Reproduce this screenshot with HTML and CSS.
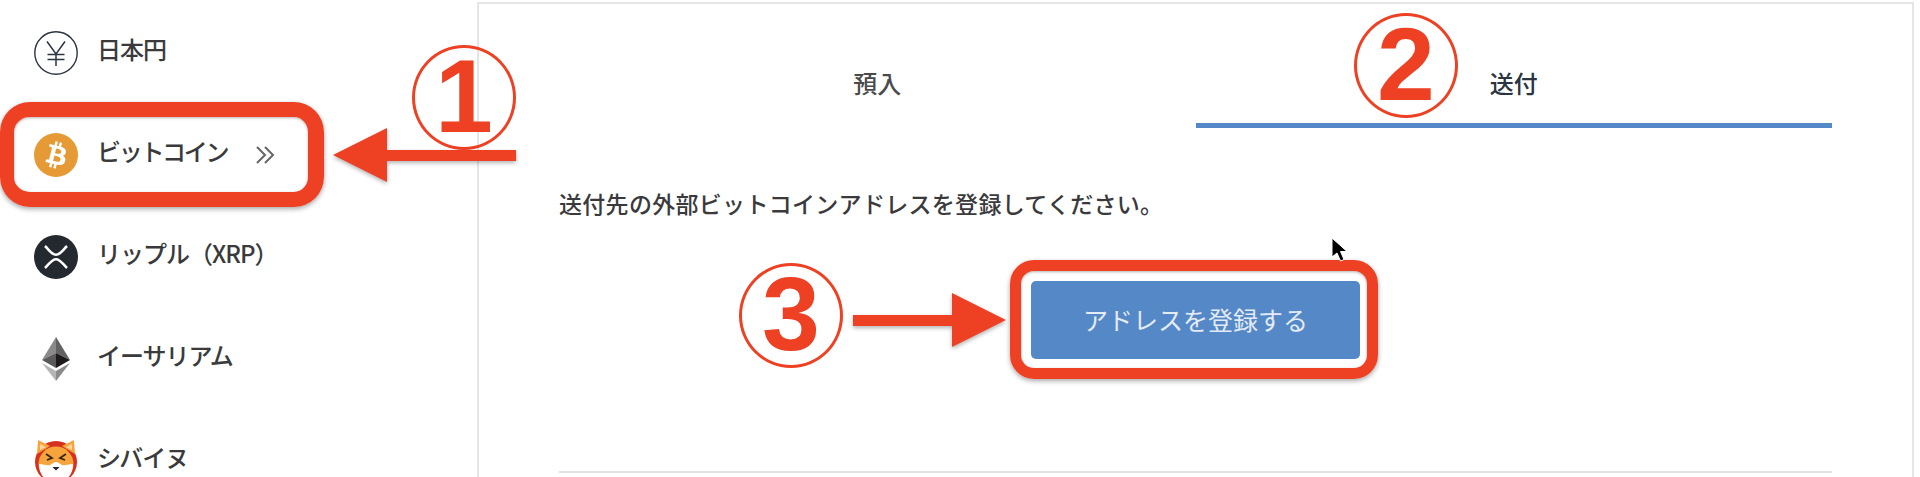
FILE: index.html
```html
<!DOCTYPE html>
<html lang="ja">
<head>
  <meta charset="UTF-8" />
  <title>送付</title>
  <link rel="stylesheet" href="styles.css">
</head>
<body>
  <div class="page">
    <ul class="coins">
      <li class="coin">
        <svg class="coin-icon" viewBox="0 0 44 44"><circle cx="22" cy="22" r="21.2" fill="#fff" stroke="#2b3440" stroke-width="1.4"/><path d="M13 10.5 22 23l9-12.5M22 23v12M13.5 23.5h17M13.5 28.5h17" fill="none" stroke="#2b3440" stroke-width="1.5"/></svg>
        <span class="coin-name">日本円</span>
      </li>
      <li class="coin">
        <svg class="coin-icon" viewBox="0 0 32 32"><circle cx="16" cy="16" r="16" fill="#e59a35"/><path fill="#fff" d="M23.189 14.02c.314-2.096-1.283-3.223-3.465-3.975l.708-2.84-1.728-.43-.69 2.765c-.454-.114-.92-.22-1.385-.326l.695-2.783L15.596 6l-.708 2.839c-.376-.086-.746-.17-1.104-.26l.002-.009-2.384-.595-.46 1.846s1.283.294 1.256.312c.7.175.826.638.805 1.006l-.806 3.235c.048.012.11.03.18.057l-.183-.045-1.13 4.532c-.086.212-.303.531-.793.41.018.025-1.256-.313-1.256-.313l-.858 1.978 2.25.561c.418.105.828.215 1.231.318l-.715 2.872 1.727.43.708-2.84c.472.127.93.245 1.378.357l-.706 2.828 1.728.43.715-2.866c2.948.558 5.164.333 6.097-2.333.752-2.146-.037-3.385-1.588-4.192 1.13-.26 1.98-1.003 2.207-2.538zm-3.95 5.538c-.533 2.147-4.148.986-5.32.695l.95-3.805c1.172.293 4.929.872 4.37 3.11zm.535-5.569c-.487 1.953-3.495.96-4.47.717l.86-3.45c.975.243 4.118.696 3.61 2.733z"/></svg>
        <span class="coin-name coin-name-tight">ビットコイン</span>
        <svg class="chevrons" viewBox="0 0 20 20"><path d="M1 2l8 8-8 8M9 2l8 8-8 8" fill="none" stroke="#666" stroke-width="2"/></svg>
      </li>
      <li class="coin">
        <svg class="coin-icon" viewBox="0 0 32 32"><circle cx="16" cy="16" r="16" fill="#23292f"/><path d="M8 8c3.500 3.500 5 6.400 8 6.400s4.500-2.900 8-6.400M8 24c3.500-3.500 5-6.400 8-6.400s4.500 2.900 8 6.400" fill="none" stroke="#fff" stroke-width="1.800"/></svg>
        <span class="coin-name">リップル（XRP）</span>
      </li>
      <li class="coin">
        <svg class="coin-icon" viewBox="0 0 44 44">
          <polygon points="22,0 8,23 22,16" fill="#8a8a8a"/>
          <polygon points="22,0 36,23 22,16" fill="#626262"/>
          <polygon points="8,23 22,16 22,31" fill="#5a5a5a"/>
          <polygon points="36,23 22,16 22,31" fill="#1f1a1a"/>
          <polygon points="8,26 22,44 22,34" fill="#b5b5b5"/>
          <polygon points="36,26 22,44 22,34" fill="#8a8a8a"/>
        </svg>
        <span class="coin-name">イーサリアム</span>
      </li>
      <li class="coin">
        <svg class="coin-icon" viewBox="0 0 44 44">
          <circle cx="22" cy="23" r="21" fill="#d8301f"/>
          <circle cx="22" cy="25" r="17.500" fill="#f6a53c"/>
          <polygon points="3,15 4,1 16,7" fill="#f6a53c"/>
          <polygon points="41,15 40,1 28,7" fill="#f6a53c"/>
          <polygon points="6,11 6,5 12,8" fill="#f9d6a0"/>
          <polygon points="38,11 38,5 32,8" fill="#f9d6a0"/>
          <path d="M5 25c5 0 8 2 11 1 2-1 4-3 6-3s4 2 6 3c3 1 6-1 11-1 0 11-7 19-17 19S5 36 5 25z" fill="#fff"/>
          <path d="M12 15l6 4-5 2M32 15l-6 4 5 2" fill="none" stroke="#3a2414" stroke-width="1.800"/>
          <path d="M18.500 28h7l-3.500 3.500z" fill="#222"/>
        </svg>
        <span class="coin-name">シバイヌ</span>
      </li>
    </ul>

    <main class="panel">
      <div class="tabs">
        <div class="tab">預入</div>
        <div class="tab tab-active">送付</div>
      </div>
      <p class="lead">送付先の外部ビットコインアドレスを登録してください。</p>
      <button class="register">アドレスを登録する</button>
      <hr class="divider">
    </main>
  </div>

  <!-- annotations on top of the screenshot -->
  <div class="mark mark-1">1</div>
  <div class="mark mark-2">2</div>
  <div class="mark mark-3">3</div>
  <div class="frame frame-coin"></div>
  <div class="frame frame-button"></div>
  <svg class="arrow arrow-left" viewBox="0 0 184 54"><polygon points="0,27 54,0 54,22 183,22 183,33 54,33 54,54"/></svg>
  <svg class="arrow arrow-right" viewBox="0 0 153 54"><polygon points="153,27 99,0 99,22 0,22 0,33 99,33 99,54"/></svg>
  <svg class="cursor" viewBox="0 0 18 26"><path d="M2 1v19l5-4 3.500 8 3.500-1.500-3.500-8H17z" fill="#000" stroke="#fff" stroke-width="1"/></svg>
</body>
</html>
```

FILE: styles.css
```css
* {
  margin: 0;
  padding: 0;
  box-sizing: border-box;
}

html, body {
  height: 100%;
  overflow: hidden;
  background: #fff;
  font-family: "Noto Sans CJK JP", "Liberation Sans", sans-serif;
  color: #3a3a3c;
}

.page {
  display: flex;
  height: 477px;
  padding-top: 2px;
  overflow: hidden;
}

.coins {
  list-style: none;
  width: 477px;
  flex: none;
}

.coin {
  display: flex;
  align-items: center;
  gap: 19px;
  height: 102px;
  padding-left: 34px;
  font-size: 24px;
  font-weight: 500;
}

.coin-name {
  margin-bottom: 10px;
  letter-spacing: -1px;
}

.coin-name-tight {
  letter-spacing: -2.3px;
}

.coin-icon {
  width: 44px;
  height: 44px;
  flex: none;
}

.chevrons {
  width: 20px;
  height: 20px;
  margin-left: 10px;
}

.panel {
  width: 1437px;
  flex: none;
  padding: 0 80px;
  border: 2px solid #e5e5e5;
  border-bottom: 0;
}

.tabs {
  display: grid;
  grid-template-columns: 1fr 1fr;
}

.tab {
  padding: 62px 0 23px;
  border-bottom: 5px solid transparent;
  color: #4a4a4c;
  text-align: center;
  font-size: 24px;
  font-weight: 500;
  line-height: 34px;
}

.tab-active {
  border-bottom-color: #5588c6;
  color: #2b3440;
}

.lead {
  margin-top: 58px;
  font-size: 23px;
  font-weight: 500;
  letter-spacing: .3px;
  line-height: 34px;
}

.register {
  display: block;
  width: 329px;
  height: 78px;
  margin: 61px auto 0;
  padding-bottom: 3px;
  border: 0;
  border-radius: 5px;
  background: #5588c6;
  color: #e3ebf6;
  font-family: inherit;
  font-size: 25px;
}

.divider {
  height: 2px;
  margin-top: 112px;
  border: 0;
  background: #e2e2e2;
}

/* annotations */
.mark {
  position: absolute;
  width: 104px;
  height: 105px;
  padding-bottom: 4px;
  border: 3px solid #ee4023;
  border-radius: 50%;
  display: flex;
  align-items: center;
  justify-content: center;
  color: #ee4023;
  font-family: "Liberation Sans", sans-serif;
  font-size: 104px;
  font-weight: 700;
  line-height: 1;
}

.mark-1 { left: 412px; top: 45px; }
.mark-2 { left: 1354px; top: 13px; }
.mark-3 { left: 739px; top: 263px; }

.frame {
  position: absolute;
  border: solid #ee4023;
  box-shadow: 0 2px 5px rgba(0, 0, 0, .35), inset 0 1px 3px rgba(0, 0, 0, .3);
}

.frame-coin {
  left: 0;
  top: 102px;
  width: 324px;
  height: 105px;
  border-width: 15px 16px 15px 14px;
  border-radius: 30px;
}

.frame-button {
  left: 1010px;
  top: 260px;
  width: 368px;
  height: 119px;
  border-width: 11px;
  border-radius: 24px;
}

.arrow {
  position: absolute;
  fill: #ee4023;
  filter: drop-shadow(0 2px 2px rgba(0, 0, 0, .3));
}

.arrow-left {
  left: 333px;
  top: 128px;
  width: 184px;
  height: 54px;
}

.arrow-right {
  left: 853px;
  top: 293px;
  width: 153px;
  height: 54px;
}

.cursor {
  position: absolute;
  left: 1330px;
  top: 237px;
  width: 18px;
  height: 26px;
}
```
